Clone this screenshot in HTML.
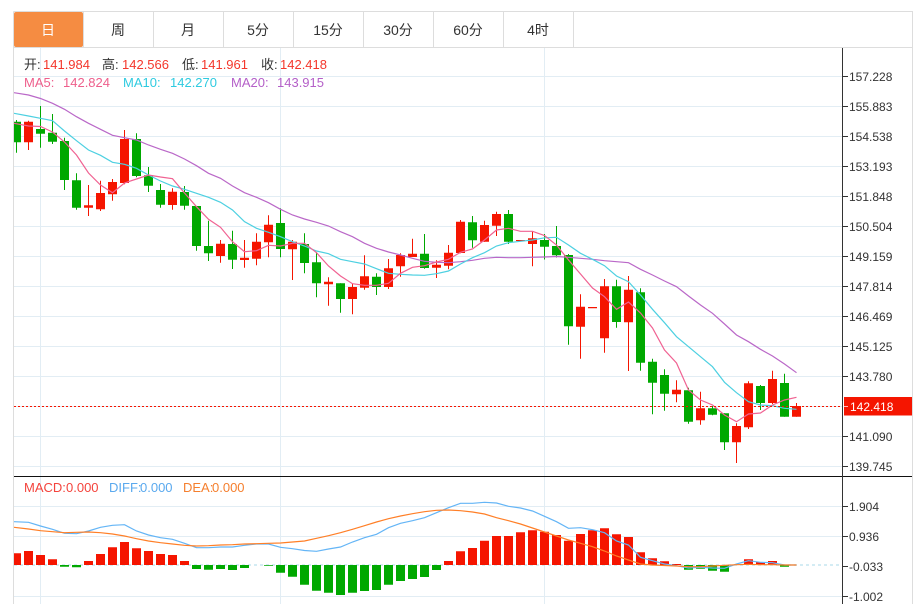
<!DOCTYPE html>
<html lang="zh">
<head>
<meta charset="utf-8">
<title>K线图</title>
<style>
html,body{margin:0;padding:0;background:#fff;width:924px;height:604px;overflow:hidden}
svg{display:block;font-family:"Liberation Sans","Noto Sans CJK SC",sans-serif}
</style>
</head>
<body>
<svg width="924" height="604" viewBox="0 0 924 604" xmlns="http://www.w3.org/2000/svg">
<defs>
<clipPath id="k"><rect x="14" y="48" width="828" height="428"/></clipPath>
<clipPath id="m"><rect x="14" y="477" width="828" height="127"/></clipPath>
</defs>
<!-- grid -->
<path d="M14 76.5H842M14 106.5H842M14 136.5H842M14 166.5H842M14 196.5H842M14 226.5H842M14 256.5H842M14 286.5H842M14 316.5H842M14 346.5H842M14 376.5H842M14 406.5H842M14 436.5H842M14 466.5H842M14 506.5H842M14 536.5H842M14 596.5H842M40.5 48V604M280.5 48V604M544.5 48V604" stroke="#e2edf4" stroke-width="1" fill="none"/>
<path d="M14 565H842" stroke="#c6e6f0" stroke-width="1.4" stroke-dasharray="3 3" fill="none"/>
<!-- frame and tabs -->
<path d="M13.5 11.5H912.5V604M13.5 11.5V604M14 47.5H912.5M83.5 12V47M153.5 12V47M223.5 12V47M293.5 12V47M363.5 12V47M433.5 12V47M503.5 12V47M573.5 12V47" stroke="#dddddd" stroke-width="1" fill="none"/>
<rect x="14" y="12" width="69" height="35" rx="2" fill="#f58c42"/>
<g font-size="14" fill="#333" text-anchor="middle">
<text x="48" y="35" fill="#fff">日</text>
<text x="118" y="35">周</text>
<text x="188" y="35">月</text>
<text x="258" y="35">5分</text>
<text x="328" y="35">15分</text>
<text x="398" y="35">30分</text>
<text x="468" y="35">60分</text>
<text x="538" y="35">4时</text>
</g>
<!-- candles -->
<g clip-path="url(#k)">
<path fill="none" stroke="#00a800" stroke-width="1" d="M16.5 120V152.7M40.5 106V147.7M52.5 114V144M64.5 137.7V190M76.5 173.3V209.7M136.5 133.3V177.3M148.5 167V192M160.5 184V207.7M184.5 186V209.7M196.5 206V250.7M208.5 220.7V261M232.5 230.7V269M280.5 208.3V257.3M304.5 233.3V273.3M316.5 252.3V297.3M340.5 283.3V312.7M376.5 273.3V295M424.5 234V268.7M472.5 216V247.7M508.5 210V244M544.5 234V259.5M556.5 226V257.5M568.5 254V344.7M616.5 279.7V327.7M640.5 288.3V370.7M652.5 358.7V414.3M664.5 369.3V410.7M688.5 387.7V423.7M712.5 406V415.3M724.5 413.3V450M760.5 385V410M784.5 373.7V416.7"/>
<path fill="#00a800" d="M12 121.7h9V142.3h-9zM36 129h9V133.7h-9zM48 132.7h9V141.7h-9zM60 141h9V180h-9zM72 180.3h9V207.7h-9zM132 139h9V176h-9zM144 175.3h9V185.7h-9zM156 190h9V204.7h-9zM180 192h9V205.7h-9zM192 206h9V246h-9zM204 246h9V253.3h-9zM228 244h9V259.7h-9zM276 223h9V249h-9zM300 244h9V263h-9zM312 262.3h9V283.3h-9zM336 283.3h9V299h-9zM372 276.7h9V287h-9zM420 253.7h9V268h-9zM468 222.3h9V240.3h-9zM504 214h9V241.7h-9zM540 240h9V246.7h-9zM552 246h9V255.3h-9zM564 255h9V326.3h-9zM612 286.3h9V322h-9zM636 292.3h9V362.7h-9zM648 361.7h9V382.7h-9zM660 375h9V393.7h-9zM684 390.3h9V421.7h-9zM708 408.3h9V414.7h-9zM720 413.3h9V442.3h-9zM756 386h9V403h-9zM780 383h9V416.7h-9z"/>
<path fill="none" stroke="#f51500" stroke-width="1" d="M28.5 120.7V150M88.5 185V216M100.5 180.7V211M112.5 179V200.7M124.5 130V184.3M172.5 188.3V209.7M220.5 240V262.7M244.5 240V267.7M256.5 233.3V265.3M268.5 215.3V257.3M292.5 240V280M328.5 277.3V305.7M352.5 284V314.3M364.5 255.3V289.7M388.5 259V289M400.5 253.3V276.7M412.5 238.7V257M436.5 260.3V278M448.5 245V269.3M460.5 220V253.3M484.5 220.7V241.7M496.5 211.7V236M532.5 231.7V266.3M580.5 294.3V358.7M604.5 279V352.7M628.5 276V371M676.5 380.3V402.3M700.5 391.7V424.7M736.5 423.3V463M748.5 381.3V429M772.5 370.7V404M796.5 403V416.7"/>
<path fill="#f51500" d="M24 121.7h9V142.3h-9zM84 205.3h9V207.7h-9zM96 193h9V209.3h-9zM108 182h9V194.3h-9zM120 139h9V183h-9zM168 191.7h9V205h-9zM216 243.7h9V256h-9zM240 257.7h9V260h-9zM252 241.7h9V258.7h-9zM264 224.7h9V242.3h-9zM288 241.7h9V249.3h-9zM324 281.7h9V284.3h-9zM348 287h9V299h-9zM360 276.3h9V287.7h-9zM384 268.3h9V287h-9zM396 255h9V266.3h-9zM408 253.7h9V257h-9zM432 264.7h9V267.7h-9zM444 252.7h9V265.7h-9zM456 221.7h9V253h-9zM480 225h9V241.7h-9zM492 214h9V225.7h-9zM516 240h9V241h-9zM528 238.3h9V244h-9zM576 306.7h9V326.7h-9zM588 307h9V308.3h-9zM600 286.3h9V338.3h-9zM624 289.7h9V322.3h-9zM672 389.7h9V394.3h-9zM696 408.3h9V420.3h-9zM732 426h9V442.3h-9zM744 383.3h9V427.3h-9zM768 379h9V403h-9zM792 406h9V416.7h-9z"/>
<!-- MA lines -->
<polyline fill="none" stroke="#ba68c8" stroke-width="1.2" points="14,92.7 28.5,95 40.5,98.5 52.5,103.3 64.5,109.3 76.5,116.7 88.5,123.3 100.5,129.3 112.5,135.3 124.5,137.7 136.5,140 148.5,145 160.5,149.3 172.5,153.3 184.5,159 196.5,165.7 208.5,173.3 220.5,178.3 232.5,186 244.5,192.7 256.5,197.3 268.5,202.7 280.5,209.3 292.5,215 304.5,219 316.5,222.3 328.5,226 340.5,231.7 352.5,236.7 364.5,243.3 376.5,248.3 388.5,252 400.5,255 412.5,258.3 424.5,261.3 436.5,262.3 448.5,262.7 460.5,261.7 472.5,260.3 484.5,258.3 496.5,257.3 508.5,257.7 520.5,257.7 532.5,257.3 544.5,257 556.5,256.5 568.5,257.3 580.5,258.3 592.5,259.3 604.5,260.7 616.5,261.7 628.5,262.7 640.5,269.3 652.5,275 664.5,281 676.5,286.7 688.5,296 700.5,305 712.5,313.3 724.5,324 736.5,335 748.5,341.7 760.5,349.3 772.5,356 784.5,364 796.5,372.7"/>
<polyline fill="none" stroke="#4dd0e1" stroke-width="1.2" points="14,113.3 28.5,116 40.5,118.3 52.5,120.7 64.5,131 76.5,140.7 88.5,150 100.5,155.3 112.5,162.3 124.5,164.3 136.5,168.3 148.5,175 160.5,181 172.5,186 184.5,189.3 196.5,193.3 208.5,197.3 220.5,202.3 232.5,210 244.5,221.7 256.5,228.3 268.5,232.3 280.5,236.7 292.5,241.7 304.5,246 316.5,251 328.5,253.7 340.5,259.3 352.5,261.7 364.5,264 376.5,268.7 388.5,273.3 400.5,274.3 412.5,275 424.5,275.3 436.5,273.7 448.5,271 460.5,264 472.5,257.7 484.5,252.7 496.5,246 508.5,242.7 520.5,241.3 532.5,240 544.5,237.8 556.5,237.3 568.5,245 580.5,253.3 592.5,259.3 604.5,265.7 616.5,276 628.5,281.7 640.5,295 652.5,309.3 664.5,322.7 676.5,336.7 688.5,346.7 700.5,356.7 712.5,366.7 724.5,382.3 736.5,392.7 748.5,401.7 760.5,405 772.5,405.7 784.5,408.3 796.5,409.3"/>
<polyline fill="none" stroke="#f06292" stroke-width="1.2" points="14,123.3 28.5,126 40.5,126.5 52.5,132 64.5,142 76.5,155 88.5,173 100.5,185 112.5,192.7 124.5,183 136.5,179 148.5,175 160.5,177 172.5,178.7 184.5,193 196.5,206.7 208.5,219.3 220.5,227.3 232.5,241.7 244.5,251.7 256.5,250.7 268.5,245.3 280.5,246 292.5,243.3 304.5,243.3 316.5,252.7 328.5,266 340.5,276 352.5,283.7 364.5,285.3 376.5,285.3 388.5,283.3 400.5,273.3 412.5,267.3 424.5,265.7 436.5,262 448.5,259.3 460.5,252.3 472.5,249 484.5,240 496.5,230 508.5,228.3 520.5,231.3 532.5,231.3 544.5,235.5 556.5,245 568.5,260 580.5,274 592.5,288 604.5,296.7 616.5,309.3 628.5,302 640.5,313 652.5,328 664.5,350 676.5,363 688.5,390 700.5,400 712.5,405 724.5,415 736.5,421.7 748.5,414 760.5,413 772.5,405 784.5,400 796.5,397.3"/>
</g>
<!-- price line -->
<path d="M14 406.5H843" stroke="#f51500" stroke-width="1" stroke-dasharray="2 2" fill="none"/>
<!-- header text -->
<g font-size="13">
<text x="24" y="69" fill="#333">开:</text>
<text x="43" y="69" fill="#f4372c">141.984</text>
<text x="102" y="69" fill="#333">高:</text>
<text x="122" y="69" fill="#f4372c">142.566</text>
<text x="182" y="69" fill="#333">低:</text>
<text x="201" y="69" fill="#f4372c">141.961</text>
<text x="261" y="69" fill="#333">收:</text>
<text x="280" y="69" fill="#f4372c">142.418</text>
<text x="24" y="87" fill="#ee5f8c">MA5:</text>
<text x="63" y="87" fill="#ee5f8c">142.824</text>
<text x="123" y="87" fill="#2fcbe0">MA10:</text>
<text x="170" y="87" fill="#2fcbe0">142.270</text>
<text x="231" y="87" fill="#b45fc8">MA20:</text>
<text x="277" y="87" fill="#b45fc8">143.915</text>
</g>
<!-- separator -->
<path d="M14 476.5H912" stroke="#111" stroke-width="1"/>
<!-- MACD -->
<g clip-path="url(#m)">
<path fill="#f51500" d="M12 553.3h9V565h-9zM24 551h9V565h-9zM36 555h9V565h-9zM48 559.3h9V565h-9zM84 561h9V565h-9zM96 554h9V565h-9zM108 547.3h9V565h-9zM120 542h9V565h-9zM132 548.3h9V565h-9zM144 551h9V565h-9zM156 554h9V565h-9zM168 555h9V565h-9zM180 561h9V565h-9zM444 561h9V565h-9zM456 551.3h9V565h-9zM468 548h9V565h-9zM480 540.7h9V565h-9zM492 536h9V565h-9zM504 536h9V565h-9zM516 532.3h9V565h-9zM528 530.3h9V565h-9zM540 531.7h9V565h-9zM552 535h9V565h-9zM564 540.7h9V565h-9zM576 534h9V565h-9zM588 530.3h9V565h-9zM600 528.3h9V565h-9zM612 534.3h9V565h-9zM624 537h9V565h-9zM636 552.3h9V565h-9zM648 558.3h9V565h-9zM660 561.3h9V565h-9zM672 564h9V565h-9zM744 559.3h9V565h-9zM756 562h9V565h-9zM768 561h9V565h-9z"/>
<path fill="#00a800" d="M60 565h9V566.7h-9zM72 565h9V567.3h-9zM192 565h9V569h-9zM204 565h9V569.7h-9zM216 565h9V569h-9zM228 565h9V570h-9zM240 565h9V568h-9zM264 565h9V565.7h-9zM276 565h9V572.7h-9zM288 565h9V576.7h-9zM300 565h9V584.7h-9zM312 565h9V590.7h-9zM324 565h9V592.7h-9zM336 565h9V595h-9zM348 565h9V592.7h-9zM360 565h9V591h-9zM372 565h9V590h-9zM384 565h9V584.7h-9zM396 565h9V581h-9zM408 565h9V579h-9zM420 565h9V577h-9zM432 565h9V570h-9zM684 565h9V569.7h-9zM696 565h9V568.7h-9zM708 565h9V570.7h-9zM720 565h9V571.7h-9zM780 565h9V566.7h-9z"/>
<polyline fill="none" stroke="#64b5f6" stroke-width="1.2" points="14,521.7 28.5,522.3 40.5,526 52.5,529.3 64.5,533.3 76.5,533.7 88.5,531 100.5,527.3 112.5,525.3 124.5,524.7 136.5,531 148.5,535 160.5,537.7 172.5,539.3 184.5,543.3 196.5,547.7 208.5,547.7 220.5,547 232.5,547 244.5,545.3 256.5,544 268.5,544 280.5,547.3 292.5,548.7 304.5,550.5 316.5,551.3 328.5,549 340.5,547 352.5,542 364.5,537.7 376.5,534.3 388.5,527.7 400.5,523.3 412.5,520.7 424.5,517.7 436.5,512.7 448.5,507.7 460.5,503.3 472.5,503.3 484.5,502.3 496.5,503 508.5,506.3 520.5,508 532.5,511 544.5,516.3 556.5,521.7 568.5,528.3 580.5,527.7 592.5,529.7 604.5,532.7 616.5,541 628.5,545 640.5,557.3 652.5,560.7 664.5,564 676.5,565.7 688.5,568 700.5,567.3 712.5,568 724.5,568.3 736.5,564 748.5,560.7 760.5,562.3 772.5,562.7 784.5,565 796.5,565"/>
<polyline fill="none" stroke="#ff7f27" stroke-width="1.2" points="14,527.3 28.5,529 40.5,530.7 52.5,531.7 64.5,532.7 76.5,532.3 88.5,532 100.5,532.7 112.5,534 124.5,536 136.5,538.7 148.5,541 160.5,542.7 172.5,544 184.5,545.3 196.5,546 208.5,545.7 220.5,545 232.5,544.7 244.5,544 256.5,543.7 268.5,543.3 280.5,543 292.5,542 304.5,541 316.5,538.3 328.5,535.7 340.5,532.7 352.5,529.3 364.5,525.7 376.5,522 388.5,518.7 400.5,516 412.5,513.7 424.5,511.7 436.5,510.3 448.5,510 460.5,510.7 472.5,512 484.5,514 496.5,517.7 508.5,520.7 520.5,524 532.5,528 544.5,532 556.5,536 568.5,540 580.5,543.3 592.5,546.7 604.5,551 616.5,556 628.5,560 640.5,564 652.5,565 664.5,565.5 676.5,566 688.5,566.7 700.5,566.7 712.5,566 724.5,565.3 736.5,564.7 748.5,564.3 760.5,564.7 772.5,564.7 784.5,565 796.5,565"/>
</g>
<g font-size="13">
<text x="24" y="492" fill="#f4433c">MACD:</text>
<text x="66" y="492" fill="#f4433c">0.000</text>
<text x="109" y="492" fill="#5aa9ee">DIFF:</text>
<text x="140" y="492" fill="#5aa9ee">0.000</text>
<text x="183" y="492" fill="#f57f2e">DEA:</text>
<text x="212" y="492" fill="#f57f2e">0.000</text>
</g>
<!-- axis -->
<path d="M842.5 48V604" stroke="#333" stroke-width="1" fill="none"/>
<path d="M843 76.5H848M843 106.5H848M843 136.5H848M843 166.5H848M843 196.5H848M843 226.5H848M843 256.5H848M843 286.5H848M843 316.5H848M843 346.5H848M843 376.5H848M843 436.5H848M843 466.5H848M843 506.5H848M843 536.5H848M843 566.5H848M843 596.5H848" stroke="#333" stroke-width="1" fill="none"/>
<g font-size="12" fill="#333">
<text x="849" y="81">157.228</text>
<text x="849" y="111">155.883</text>
<text x="849" y="141">154.538</text>
<text x="849" y="171">153.193</text>
<text x="849" y="201">151.848</text>
<text x="849" y="231">150.504</text>
<text x="849" y="261">149.159</text>
<text x="849" y="291">147.814</text>
<text x="849" y="321">146.469</text>
<text x="849" y="351">145.125</text>
<text x="849" y="381">143.780</text>
<text x="849" y="441">141.090</text>
<text x="849" y="471">139.745</text>
<text x="849" y="511">1.904</text>
<text x="849" y="541">0.936</text>
<text x="849" y="571">-0.033</text>
<text x="849" y="601">-1.002</text>
</g>
<rect x="844" y="397" width="68" height="18.5" fill="#f51500"/>
<path d="M844 406.5H848" stroke="#fbb" stroke-width="1"/>
<text x="850" y="411" font-size="12" fill="#fff">142.418</text>
</svg>
</body>
</html>
